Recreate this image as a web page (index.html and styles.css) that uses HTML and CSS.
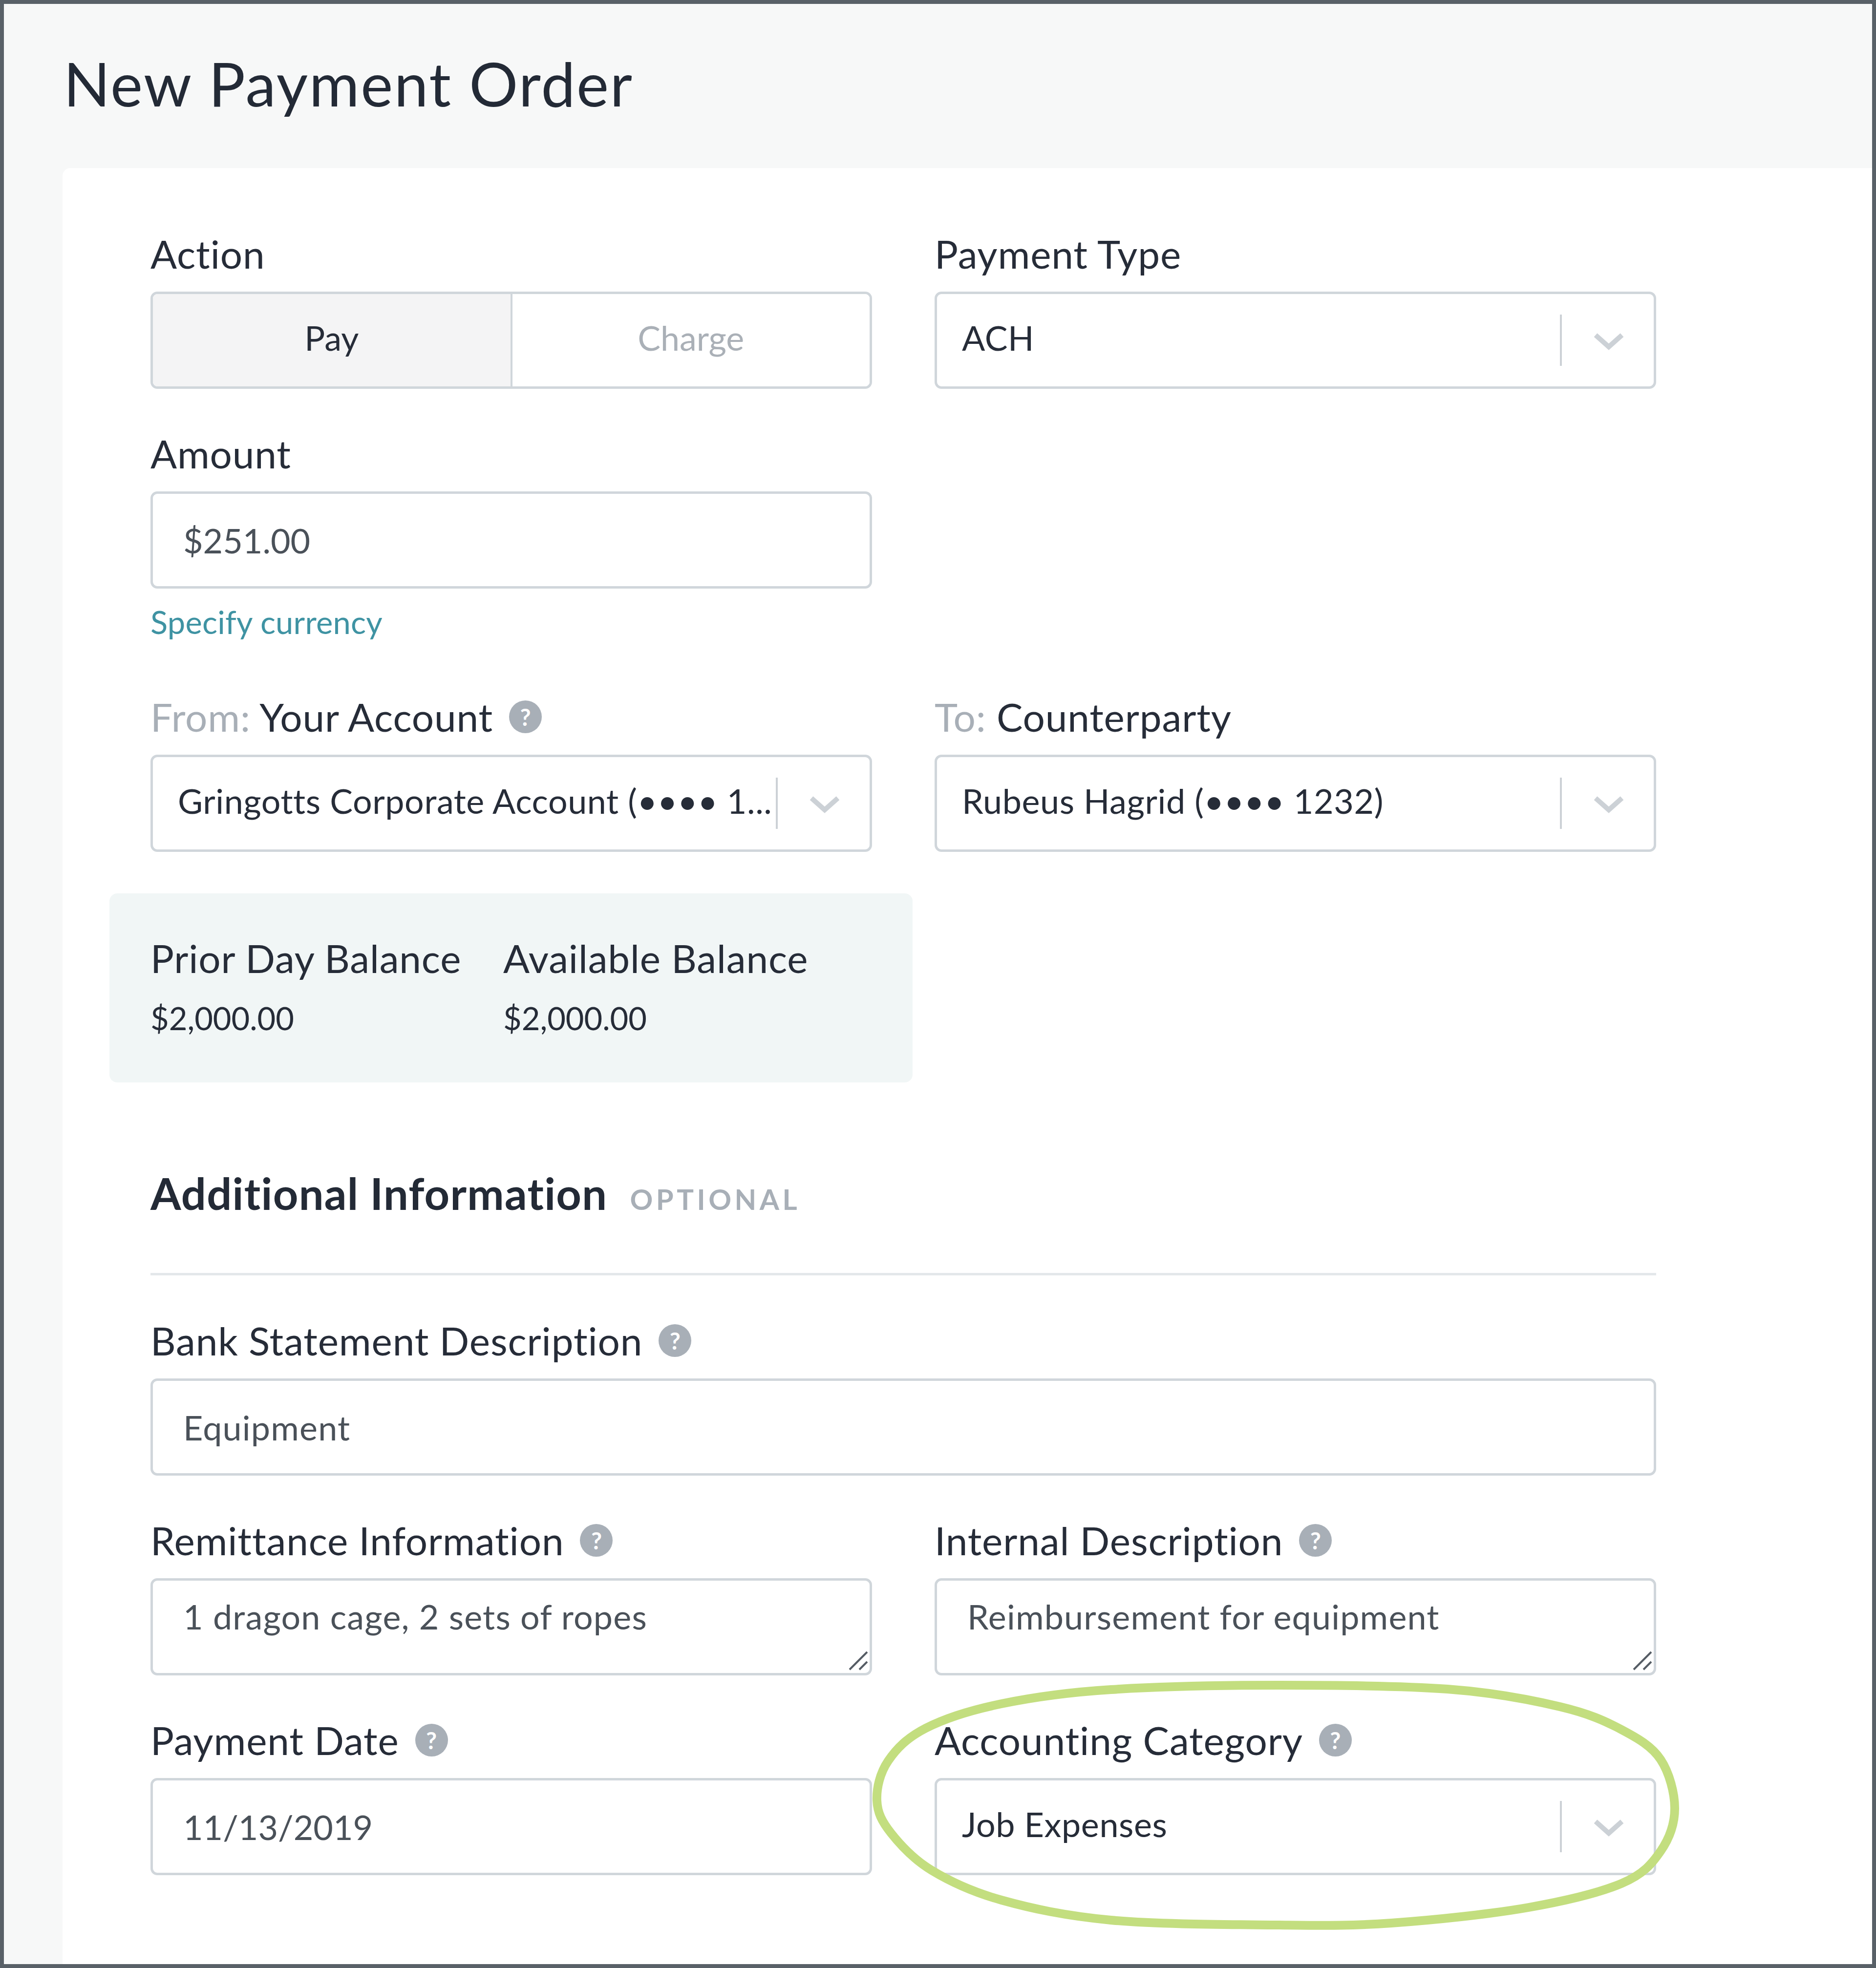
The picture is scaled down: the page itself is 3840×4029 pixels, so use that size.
FILE: index.html
```html
<!DOCTYPE html>
<html lang="en">
<head>
<meta charset="utf-8">
<title>New Payment Order</title>
<link rel="stylesheet" href="styles.css">
</head>
<body>
<div class="frame">
  <h1 class="title">New Payment Order</h1>
  <main class="card">
    <div class="form">
      <div class="grid">
        <div class="field">
          <div class="label"><span>Action</span></div>
          <div class="toggle">
            <div class="opt on">Pay</div>
            <div class="opt off">Charge</div>
          </div>
        </div>
        <div class="field">
          <div class="label"><span>Payment Type</span></div>
          <div class="box select">
            <span class="value">ACH</span>
            <span class="sep"></span>
            <svg class="chev" viewBox="0 0 64 36"><path d="M5 5 32 29 59 5"/></svg>
          </div>
        </div>
        <div class="field">
          <div class="label"><span>Amount</span></div>
          <div class="box input num">$251.00</div>
          <a class="hint">Specify currency</a>
        </div>
        <div></div>
        <div class="field">
          <div class="label"><span><span class="muted">From:</span> Your Account</span><span class="help">?</span></div>
          <div class="box select">
            <span class="value">Gringotts Corporate Account (•••• 1...</span>
            <span class="sep"></span>
            <svg class="chev" viewBox="0 0 64 36"><path d="M5 5 32 29 59 5"/></svg>
          </div>
        </div>
        <div class="field">
          <div class="label"><span><span class="muted">To:</span> Counterparty</span></div>
          <div class="box select">
            <span class="value">Rubeus Hagrid (•••• 1232)</span>
            <span class="sep"></span>
            <svg class="chev" viewBox="0 0 64 36"><path d="M5 5 32 29 59 5"/></svg>
          </div>
        </div>
      </div>

      <section class="balances">
        <div class="bal bal-a">
          <div class="bal-label">Prior Day Balance</div>
          <div class="bal-value">$2,000.00</div>
        </div>
        <div class="bal">
          <div class="bal-label">Available Balance</div>
          <div class="bal-value">$2,000.00</div>
        </div>
      </section>

      <div class="heading">
        <h2 class="h2">Additional Information</h2>
        <span class="optional">OPTIONAL</span>
      </div>
      <hr class="rule">

      <div class="grid">
        <div class="field wide">
          <div class="label"><span>Bank Statement Description</span><span class="help">?</span></div>
          <div class="box input">Equipment</div>
        </div>
        <div class="field">
          <div class="label"><span>Remittance Information</span><span class="help">?</span></div>
          <div class="box area">1 dragon cage, 2 sets of ropes
            <svg class="grip" viewBox="0 0 40 40"><path d="M2 38 38 2M22 38 38 22"/></svg>
          </div>
        </div>
        <div class="field">
          <div class="label"><span>Internal Description</span><span class="help">?</span></div>
          <div class="box area">Reimbursement for equipment
            <svg class="grip" viewBox="0 0 40 40"><path d="M2 38 38 2M22 38 38 22"/></svg>
          </div>
        </div>
        <div class="field">
          <div class="label"><span>Payment Date</span><span class="help">?</span></div>
          <div class="box input num">11/13/2019</div>
        </div>
        <div class="field">
          <div class="label"><span>Accounting Category</span><span class="help">?</span></div>
          <div class="box select">
            <span class="value">Job Expenses</span>
            <span class="sep"></span>
            <svg class="chev" viewBox="0 0 64 36"><path d="M5 5 32 29 59 5"/></svg>
          </div>
        </div>
      </div>
    </div>
  </main>
  <svg class="circle" viewBox="0 0 3840 4029"><path d="M2618 3450C2733 3450 2867 3451 2963 3458C3059 3465 3134 3480 3193 3494C3252 3508 3285 3523 3319 3541C3353 3559 3381 3575 3399 3602C3417 3629 3428 3671 3428 3702C3428 3733 3417 3764 3399 3790C3381 3816 3364 3837 3319 3856C3274 3875 3208 3891 3129 3905C3050 3919 2933 3931 2848 3937C2763 3943 2714 3942 2618 3941C2522 3940 2369 3940 2274 3931C2179 3922 2111 3907 2050 3890C1989 3873 1945 3852 1907 3829C1869 3806 1843 3777 1824 3753C1805 3729 1796 3711 1795 3686C1794 3661 1801 3630 1818 3605C1835 3580 1856 3558 1895 3538C1934 3518 1987 3501 2050 3488C2113 3475 2179 3465 2274 3459C2369 3453 2503 3450 2618 3450Z"/></svg>
</div>
</body>
</html>
```
FILE: styles.css
```css
* { box-sizing: border-box; }
html, body { margin: 0; padding: 0; }
body { font-family: "Lato", "Open Sans", sans-serif; color: #262c38; }
.frame {
  position: relative;
  width: 3840px;
  height: 4029px;
  border: 8px solid #596168;
  background: #f7f8f8;
  display: flex;
  flex-direction: column;
  overflow: hidden;
}
.title {
  margin: 0;
  height: 336px;
  padding: 87px 0 0 122px;
  font-size: 125px;
  line-height: 150px;
  font-weight: 400;
  letter-spacing: 2.6px;
  color: #232a36;
}
.card {
  flex: 1;
  margin-left: 120px;
  background: #fff;
  border-top-left-radius: 16px;
  padding: 125px 0 0 180px;
}
.form { width: 3082px; }
.grid {
  display: grid;
  grid-template-columns: 1fr 1fr;
  column-gap: 128px;
  row-gap: 82px;
}
.wide { grid-column: 1 / 3; }
.label {
  display: flex;
  align-items: center;
  gap: 33px;
  height: 100px;
  margin-bottom: 28px;
  font-size: 80px;
  letter-spacing: 0.9px;
  line-height: 100px;
  white-space: nowrap;
  color: #262c38;
}
.muted { color: #a8afb7; }
.help {
  width: 67px;
  height: 67px;
  border-radius: 50%;
  background: #a8afb7;
  color: #fff;
  font-size: 48px;
  font-weight: 700;
  letter-spacing: 0;
  line-height: 67px;
  text-align: center;
}
.box {
  height: 199px;
  border: 5px solid #d0d6db;
  border-radius: 14px;
  background: #fff;
  font-size: 70px;
  letter-spacing: 1.2px;
  position: relative;
}
.input {
  display: flex;
  align-items: center;
  padding-left: 62px;
  color: #4a5159;
}
.num { letter-spacing: 0; }
.area {
  padding: 28px 0 0 62px;
  line-height: 90px;
  color: #4a5159;
}
.select {
  display: flex;
  align-items: center;
  padding-left: 51px;
  letter-spacing: 0.6px;
  color: #262c38;
}
.value { flex: 1; white-space: nowrap; overflow: hidden; padding-bottom: 12px; }
.sep {
  width: 4px;
  height: 105px;
  background: #ccd1d6;
  flex: none;
}
.chev {
  flex: none;
  width: 64px;
  height: 36px;
  margin: 5px 60px 0 64px;
  fill: none;
  stroke: #ccd1d6;
  stroke-width: 10;
}
.grip {
  position: absolute;
  right: 3px;
  bottom: 5px;
  width: 40px;
  height: 40px;
  fill: none;
  stroke: #555c64;
  stroke-width: 4;
}
.toggle {
  display: flex;
  height: 199px;
  border: 5px solid #d0d6db;
  border-radius: 14px;
  overflow: hidden;
  font-size: 70px;
}
.opt {
  flex: 1;
  display: flex;
  align-items: center;
  justify-content: center;
  padding-bottom: 12px;
}
.on { background: #f4f4f5; border-right: 4px solid #d0d6db; color: #262c38; }
.off { background: #fff; color: #aab0b7; }
.hint {
  display: block;
  margin: 28px 0 22px;
  font-size: 65px;
  letter-spacing: 0.2px;
  line-height: 80px;
  color: #3f93a3;
}
.balances {
  display: flex;
  width: 1644px;
  height: 387px;
  margin: 85px 0 0 -84px;
  padding: 82px 0 0 84px;
  background: #f1f6f6;
  border-radius: 16px;
}
.bal-a { width: 722px; }
.bal-label { font-size: 80px; letter-spacing: 0.9px; line-height: 100px; color: #262c38; }
.bal-value { font-size: 65px; line-height: 80px; margin-top: 33px; color: #262c38; }
.heading {
  display: flex;
  align-items: baseline;
  gap: 46px;
  margin-top: 166px;
  height: 150px;
}
.h2 {
  margin: 0;
  font-size: 90px;
  letter-spacing: 1.3px;
  line-height: 120px;
  font-weight: 700;
  color: #232a36;
}
.optional {
  font-size: 58px;
  letter-spacing: 6.5px;
  font-weight: 700;
  color: #a8afb7;
}
.rule {
  margin: 74px 0 83px;
  border: 0;
  height: 5px;
  background: #e3e7ea;
}
.circle {
  position: absolute;
  left: -8px;
  top: -8px;
  width: 3840px;
  height: 4029px;
  fill: none;
  stroke: #c3de7f;
  stroke-width: 18;
  pointer-events: none;
}
```
